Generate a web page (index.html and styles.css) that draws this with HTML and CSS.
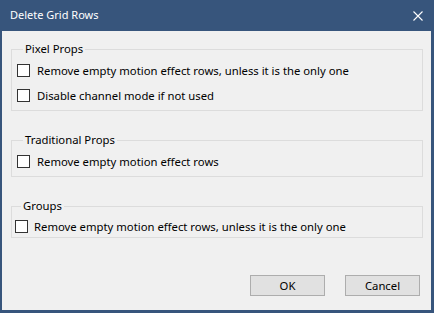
FILE: index.html
```html
<!DOCTYPE html>
<html lang="en">
<head>
    <meta charset="UTF-8">
    <title>Delete Grid Rows</title>
    <link rel="stylesheet" href="styles.css">
</head>
<body>
    <div class="window">
        <div class="title-bar">
            <span class="title">Delete Grid Rows</span>
            <svg class="close" width="10" height="10" viewBox="0 0 10 10">
                <path d="M0.5 0.5 L9.5 9.5 M9.5 0.5 L0.5 9.5" stroke="#ffffff" stroke-width="1.1" fill="none"/>
            </svg>
        </div>
        <div class="content">
            <fieldset class="group">
                <legend>Pixel Props</legend>
                <label class="check-row"><input type="checkbox"><span>Remove empty motion effect rows, unless it is the only one</span></label>
                <label class="check-row"><input type="checkbox"><span>Disable channel mode if not used</span></label>
            </fieldset>
            <fieldset class="group">
                <legend>Traditional Props</legend>
                <label class="check-row"><input type="checkbox"><span>Remove empty motion effect rows</span></label>
            </fieldset>
            <fieldset class="group groups">
                <legend>Groups</legend>
                <label class="check-row"><input type="checkbox"><span>Remove empty motion effect rows, unless it is the only one</span></label>
            </fieldset>
            <div class="buttons">
                <button>OK</button>
                <button>Cancel</button>
            </div>
        </div>
    </div>
</body>
</html>
```

FILE: styles.css
```css
body {
    margin: 0;
    padding: 0;
    font-family: "Noto Sans", Arial, sans-serif;
    font-size: 11.3px;
    color: #000000;
}
.window {
    width: 434px;
    height: 313px;
    box-sizing: border-box;
    background-color: #f0f0f0;
    border-left: 2px solid #37557c;
    border-right: 3px solid #37557c;
    border-bottom: 3px solid #37557c;
    display: flex;
    flex-direction: column;
}
.title-bar {
    height: 31px;
    margin-left: -2px;
    margin-right: -3px;
    background-color: #37557c;
    color: #ffffff;
    display: flex;
    align-items: center;
    justify-content: space-between;
    padding: 0 11px 0 10px;
    flex-shrink: 0;
}
.title {
    font-size: 11px;
    line-height: 16px;
    margin-top: -1px;
}
.close {
    display: block;
}
.content {
    display: flex;
    flex-direction: column;
    padding: 0 8px 0 9px;
}
.group {
    margin: 10px 0 0 0;
    padding: 1px 0 2px 5px;
    border: 1px solid #dcdcdc;
    min-width: 0;
}
.group + .group {
    margin-top: 21px;
}
.group legend {
    margin-left: 6px;
    padding: 0 2px;
    line-height: 16px;
}
.groups {
    padding: 1px 0 0 3px;
}
.check-row {
    display: flex;
    align-items: center;
    height: 25px;
}
.groups .check-row {
    height: 22px;
}
.check-row input {
    appearance: none;
    -webkit-appearance: none;
    width: 13px;
    height: 13px;
    margin: 0 7px 0 0;
    box-sizing: border-box;
    border: 1px solid #333333;
    background-color: #ffffff;
    flex-shrink: 0;
}
.groups .check-row input {
    margin-right: 6px;
}
.buttons {
    display: flex;
    justify-content: flex-end;
    gap: 20px;
    margin-top: 37px;
    padding-right: 3px;
}
.buttons button {
    width: 75px;
    height: 21px;
    box-sizing: border-box;
    padding: 0;
    font-family: inherit;
    font-size: 11.3px;
    color: #000000;
    background-color: #e1e1e1;
    border: 1px solid #adadad;
}
```
